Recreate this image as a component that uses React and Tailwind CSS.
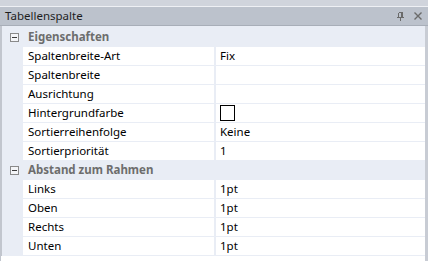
const font = { fontFamily: '"Noto Sans", "Liberation Sans", sans-serif' };

const groups = [
  {
    title: 'Eigenschaften',
    rows: [
      ['Spaltenbreite-Art', 'Fix'],
      ['Spaltenbreite', ''],
      ['Ausrichtung', ''],
      ['Hintergrundfarbe', 'color'],
      ['Sortierreihenfolge', 'Keine'],
      ['Sortierpriorität', '1'],
    ],
  },
  {
    title: 'Abstand zum Rahmen',
    rows: [
      ['Links', '1pt'],
      ['Oben', '1pt'],
      ['Rechts', '1pt'],
      ['Unten', '1pt'],
    ],
  },
];

function Minus() {
  return (
    <div className="w-[9px] h-[9px] border border-[#8a8a8a] bg-[#f4f5f8] flex items-center justify-center">
      <div className="w-[5px] h-px bg-[#3c3c3c]" />
    </div>
  );
}

function Row({ name, value }) {
  return (
    <div className="flex h-[18px] mb-px">
      <div className="w-[21px] shrink-0" />
      <div className="w-[191px] shrink-0 bg-white pl-[5px] flex items-center text-black">{name}</div>
      <div className="w-[2px] shrink-0" />
      <div className="flex-1 bg-white pl-[4px] flex items-center text-black">
        {value === 'color' ? (
          <div className="w-[15px] h-[16px] border border-black bg-white" />
        ) : (
          value
        )}
      </div>
    </div>
  );
}

export default function App() {
  return (
    <div className="w-[428px] h-[261px] overflow-hidden bg-[#d0d4dc] text-[11.5px] leading-none" style={font}>
      <div className="h-[6px]" />
      <div className="h-[20px] border-t border-[#eef0f4] border-b border-b-[#a8aeb8] bg-[#bcc2cc] flex items-center pl-[5px] pr-[6px] text-[#1e1e1e]">
        <span className="flex-1">Tabellenspalte</span>
        <svg width="8" height="9" viewBox="0 0 8 9" className="mr-[9px]" shapeRendering="crispEdges">
          <path d="M1.5 0.5V5.5M1.5 0.5H5.5V5.5M0 5.5H7M3.5 5.5V9" stroke="#6a6a6a" fill="none" />
          <path d="M4 1V5" stroke="#6a6a6a" />
        </svg>
        <svg width="8" height="8" viewBox="0 0 8 8">
          <path d="M0.5 0.5L7.5 7.5M7.5 0.5L0.5 7.5" stroke="#6a6a6a" strokeWidth="1.4" />
        </svg>
      </div>
      <div className="h-[240px] bg-[#e9edf5] border-l-2 border-l-[#c2c6ce] border-r-[3px] border-r-[#c8ccd4] pt-[2px]">
        {groups.map((g) => (
          <div key={g.title}>
            <div className="flex h-[18px] mb-px items-center">
              <div className="w-[21px] shrink-0 flex justify-end pr-[4px]">
                <Minus />
              </div>
              <span className="pl-[5px] font-bold text-[#6d6d6d]">{g.title}</span>
            </div>
            {g.rows.map(([n, v]) => (
              <Row key={n} name={n} value={v} />
            ))}
          </div>
        ))}
        <div className="h-[6px] bg-white -ml-[1px]" />
      </div>
    </div>
  );
}
